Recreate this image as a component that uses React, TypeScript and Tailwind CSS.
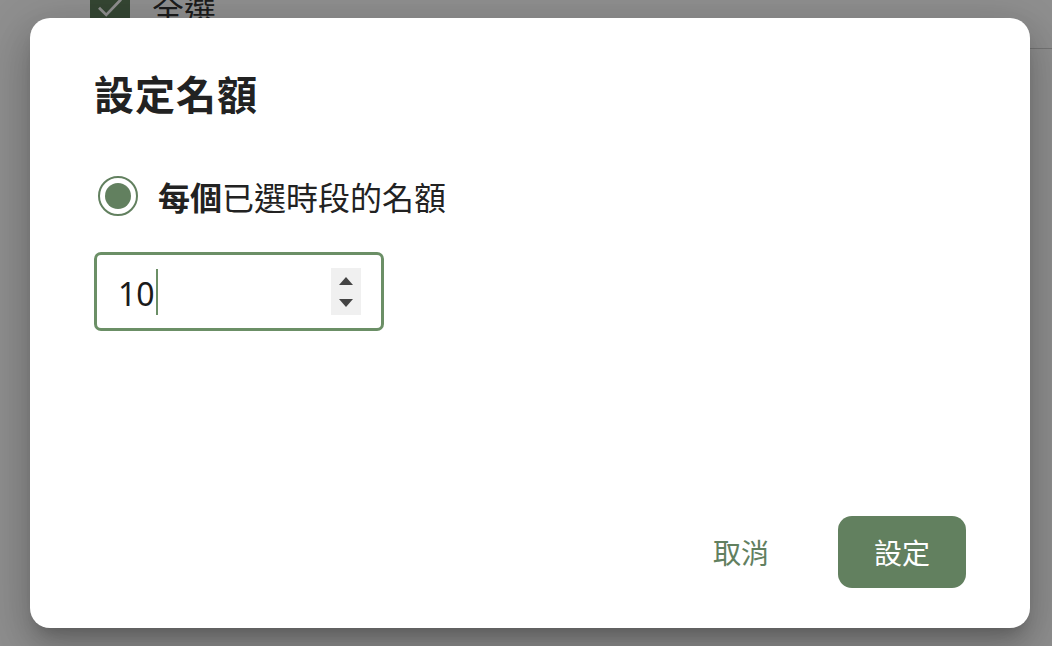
import React from "react";

export default function App() {
  return (
    <div className="relative w-[1052px] h-[646px] overflow-hidden bg-white font-['Noto_Sans_CJK_TC','Noto_Sans',sans-serif]">
      {/* page behind */}
      <div className="flex flex-col">
        <div className="flex items-center gap-[22px] pl-[90px] mt-[-24px] h-[64px]">
          <div className="w-[40px] h-[40px] rounded-[3px] bg-[#5f7d5b] flex items-center justify-center">
            <svg width="30" height="30" viewBox="0 0 24 24" fill="none" stroke="#ffffff" strokeWidth="2.2" strokeLinecap="square">
              <path d="M4 12.5l5 5L20 6" />
            </svg>
          </div>
          <span className="text-[32px] text-[#333]">全選</span>
        </div>
        <div className="h-[8px]" />
        <div className="ml-[520px] border-b border-[#d0d0d0]" />
      </div>

      {/* overlay */}
      <div className="absolute inset-0 bg-black/[0.44]" />

      {/* dialog */}
      <div className="absolute left-[30px] top-[18px] w-[1000px] h-[610px] rounded-[20px] bg-white shadow-[0_11px_15px_-7px_rgba(0,0,0,0.2),0_24px_38px_3px_rgba(0,0,0,0.14),0_9px_46px_8px_rgba(0,0,0,0.12)] flex flex-col pl-[64px] pr-[64px] pt-[51px] pb-[40px]">
        <h2 className="text-[40px] leading-[48px] font-bold text-[#222] tracking-[1px]">設定名額</h2>

        <div className="mt-[55px] h-[48px] flex items-center gap-[20px]">
          <div className="ml-[4px] w-[40px] h-[40px] rounded-full border-[2px] border-[#62805f] flex items-center justify-center">
            <div className="w-[26px] h-[26px] rounded-full bg-[#62805f]" />
          </div>
          <span className="text-[32px] leading-[48px] text-[#222]">
            <span className="font-bold">每個</span>已選時段的名額
          </span>
        </div>

        <div className="mt-[32px] w-[290px] h-[79px] rounded-[7px] border-[3px] border-[#6b8f66] flex items-center pl-[21px] pr-[20px]">
          <div className="flex-1 flex items-center">
            <span className="pt-[4px] text-[32px] leading-[48px] text-[#1a1a1a] font-['Noto_Sans',sans-serif]">10</span>
            <span className="ml-[1px] w-[2px] h-[46px] bg-[#6b8f66]" />
          </div>
          <div className="w-[30px] h-[47px] bg-[#f0f0f0] flex flex-col items-center justify-center gap-[14px]">
            <svg width="14" height="8" viewBox="0 0 14 8"><path d="M7 0L14 8H0z" fill="#444" /></svg>
            <svg width="14" height="8" viewBox="0 0 14 8"><path d="M0 0H14L7 8z" fill="#444" /></svg>
          </div>
        </div>

        <div className="mt-auto flex justify-end items-center gap-[33px]">
          <button className="h-[72px] px-[36px] text-[28px] text-[#62805f]">取消</button>
          <button className="h-[72px] px-[36px] rounded-[14px] bg-[#62805f] text-[28px] text-white">設定</button>
        </div>
      </div>
    </div>
  );
}
